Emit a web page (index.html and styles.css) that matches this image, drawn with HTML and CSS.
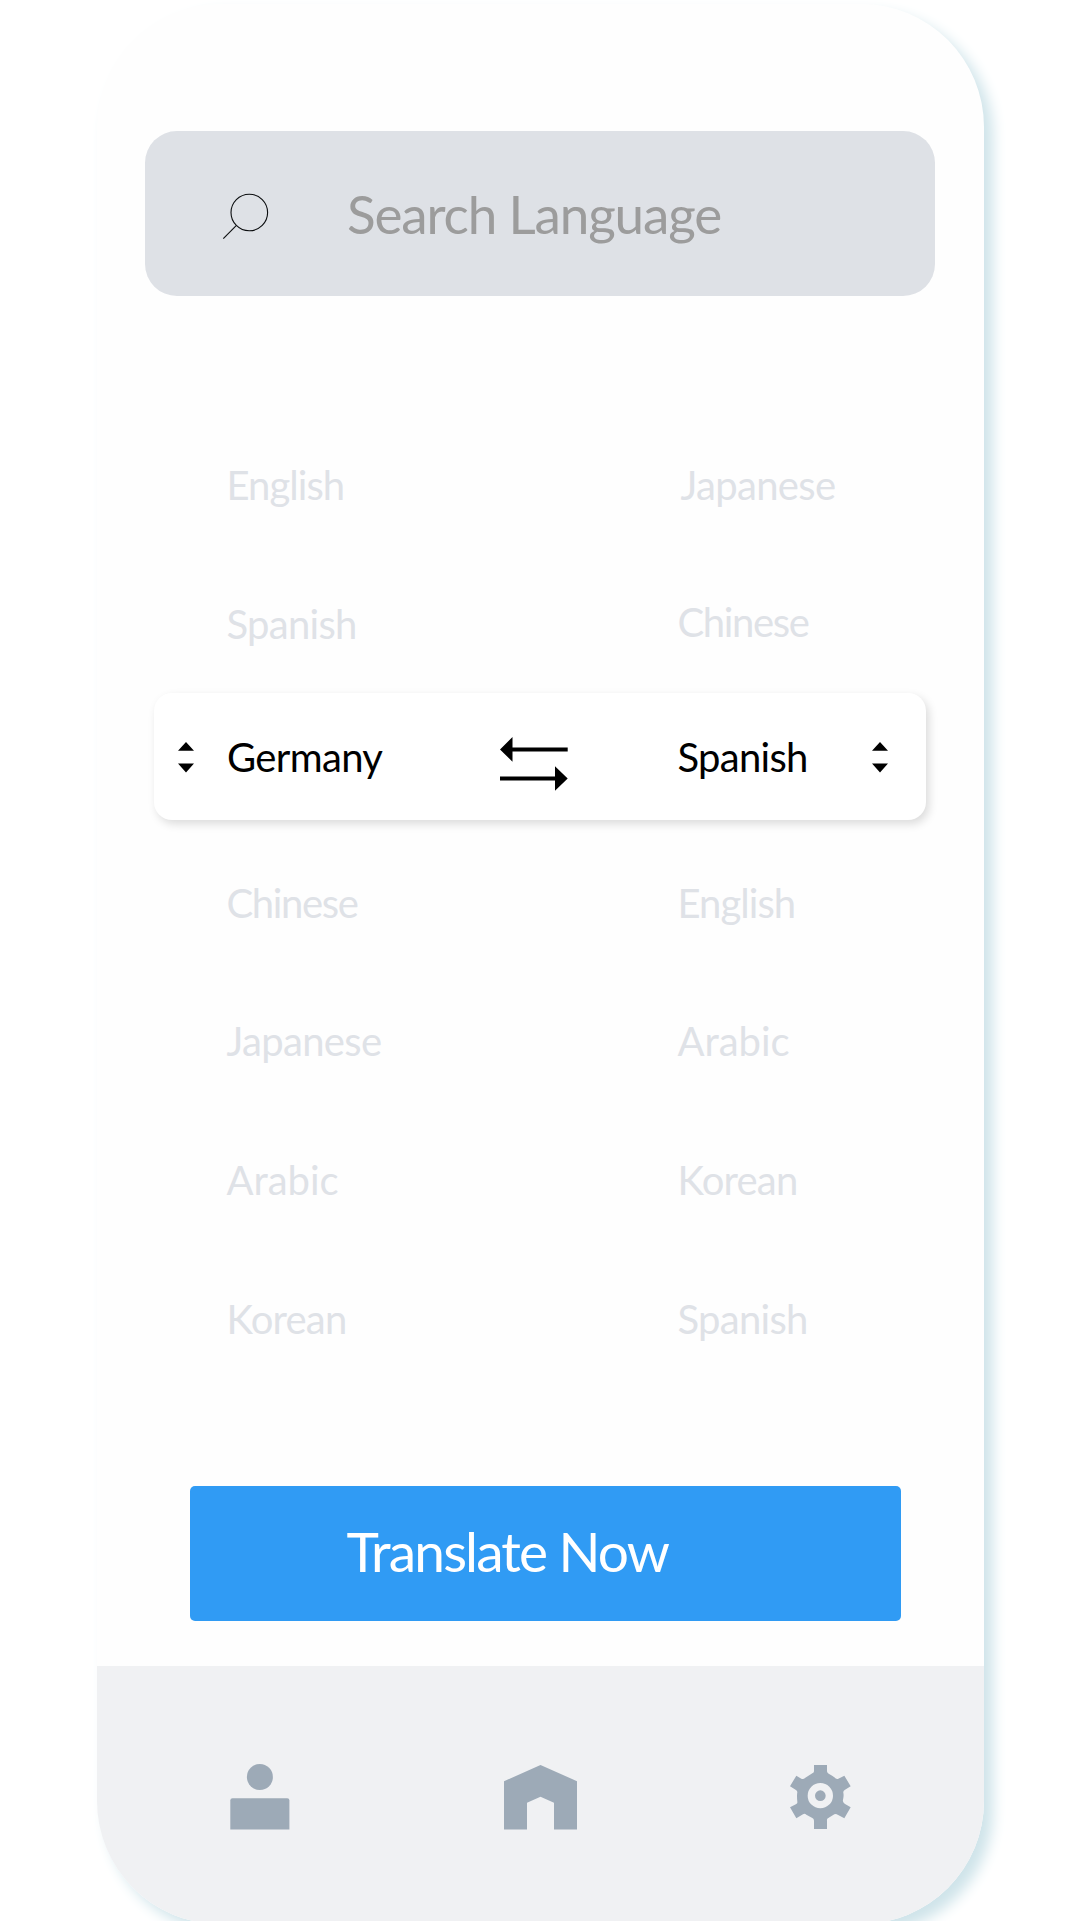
FILE: index.html
```html
<!DOCTYPE html>
<html lang="en">
<head>
<meta charset="utf-8">
<title>Translate</title>
<link rel="stylesheet" href="styles.css">
</head>
<body>
<main class="phone">
  <label class="search">
    <svg class="search-icon" viewBox="0 0 48 48" fill="none" stroke="#0b0d0f" stroke-width="1.1"><circle cx="28.3" cy="21.5" r="18.3"/><path d="M15.2 34.7 2.3 47.6"/></svg>
    <span class="search-text">Search Language</span>
  </label>

  <section class="picker">
    <div class="row"><span class="lang english">English</span><span class="lang japanese indented">Japanese</span></div>
    <div class="row"><span class="lang spanish">Spanish</span><span class="lang chinese raised">Chinese</span></div>
    <div class="selected">
      <svg class="caret" viewBox="0 0 16 31"><path d="M8 0 16 8.7H0ZM8 30.5 0 21.5H16Z"/></svg>
      <span class="lang germany">Germany</span>
      <svg class="swap" viewBox="0 0 68 54"><path d="M0 12.5 12.5 0V10.5H67.7V14.5H12.5V24.7ZM67.7 41.5 55 53.7V43.5H0V39.5H55V29.3Z"/></svg>
      <span class="lang spanish">Spanish</span>
      <svg class="caret" viewBox="0 0 16 31"><path d="M8 0 16 8.7H0ZM8 30.5 0 21.5H16Z"/></svg>
    </div>
    <div class="row"><span class="lang chinese">Chinese</span><span class="lang english">English</span></div>
    <div class="row"><span class="lang japanese">Japanese</span><span class="lang arabic">Arabic</span></div>
    <div class="row"><span class="lang arabic">Arabic</span><span class="lang korean">Korean</span></div>
    <div class="row"><span class="lang korean">Korean</span><span class="lang spanish">Spanish</span></div>
  </section>

  <button class="translate" type="button">Translate Now</button>

  <nav class="tabs">
    <svg class="tab-user" viewBox="0 0 60 66"><circle cx="29.9" cy="13" r="13"/><path d="M.3 65.5V36.5Q.3 34.3 2.5 34.3H57.2Q59.4 34.3 59.4 36.5V65.5Z"/></svg>
    <svg class="tab-home" viewBox="0 0 73 65"><path d="M0 64.5V16.2L36.5 0 73 16.2V64.5H50V37.7L36.5 31.7 23 37.7V64.5Z"/></svg>
    <svg class="tab-settings" viewBox="90 75 183 192"><path fill-rule="evenodd" d="M162 75H201V94Q201 98 206 101Q216 106 223 112Q229 119 235 116L253 107L272 139L254 150Q249 153 250 158Q252 167 249 180Q247 186 254 191L272 202L253 235L233 224Q228 220 223 223L205 234Q200 236 201 242V267H162V242Q162 236 157 234L139 224Q134 219 129 223L109 235L90 202L109 192Q113 189 112 185Q110 167 112 156Q112 153 108 150L90 139L109 107L124 116Q130 119 136 113L157 100Q162 98 162 94ZM181 129A38 38 0 1 0 181 205A38 38 0 1 0 181 129Z"/><circle cx="181" cy="167" r="16"/></svg>
  </nav>
</main>
</body>
</html>
```
FILE: styles.css
```css
* { box-sizing: border-box; }
body {
  margin: 0;
  height: 1921px;
  overflow: hidden;
  background: #fff;
  font-family: Lato, "Open Sans", sans-serif;
}
svg { display: block; flex: none; }
.phone {
  display: flex;
  flex-direction: column;
  width: 887px;
  height: 1920px;
  margin: 4px 0 0 97px;
  border-radius: 123px;
  background: #fefefe;
  box-shadow: 9px 9px 14px #cfe4ea;
}
.search {
  display: flex;
  align-items: center;
  width: 790px;
  height: 164.5px;
  margin: 127px 0 0 48.3px;
  padding-left: 75.7px;
  border-radius: 32px;
  background: #dee1e6;
}
.search-icon { width: 48px; height: 48px; margin-top: 4px; }
.search-text {
  margin: 1px 0 0 78px;
  color: #9c9c9c;
  font-size: 53px;
  line-height: 64px;
  letter-spacing: -1.15px;
  white-space: nowrap;
}
.picker { margin-top: 120px; }
.row {
  display: grid;
  grid-template-columns: 451px auto;
  height: 138.7px;
  padding-left: 129.5px;
  align-items: center;
}
.lang {
  font-size: 40px;
  line-height: 48px;
  white-space: nowrap;
  color: #dfe2e7;
}
.english { letter-spacing: -.95px; }
.japanese { letter-spacing: -.65px; }
.spanish { letter-spacing: -.7px; }
.chinese { letter-spacing: -1.35px; }
.germany { letter-spacing: -.65px; }
.korean { letter-spacing: -.8px; }
.raised { margin-top: -4px; }
.indented { margin-left: 3px; }
.selected {
  display: grid;
  grid-template-columns: 49px 273.5px 177px 194.5px 16px;
  align-items: center;
  width: 772px;
  height: 127.3px;
  margin: .3px 0 12.7px 57.2px;
  padding: 1px 0 0 23.8px;
  border-radius: 18px;
  background: #fff;
  box-shadow: 3px 4px 10px rgba(0, 0, 0, .14);
}
.selected .lang { color: #000; }
.caret { width: 16px; height: 31px; }
.swap { width: 68px; height: 54px; margin-top: 14px; }
.translate {
  width: 711.5px;
  height: 135px;
  margin: auto 0 45px 92.5px;
  padding: 0 0 5px 157px;
  border: 0;
  border-radius: 5px;
  background: #309bf4;
  color: #fff;
  font: 55px/66px Lato, "Open Sans", sans-serif;
  letter-spacing: -1.85px;
  text-align: left;
}
.tabs {
  display: flex;
  height: 258px;
  padding: 98px 0 0 133px;
  border-radius: 0 0 123px 123px;
  background: #f0f1f3;
  fill: #9daab7;
}
.tab-user { width: 60px; height: 66px; }
.tab-home { width: 73px; height: 65px; margin: 1px 0 0 214px; }
.tab-settings { width: 61px; height: 64px; margin: 1px 0 0 213px; }
```
